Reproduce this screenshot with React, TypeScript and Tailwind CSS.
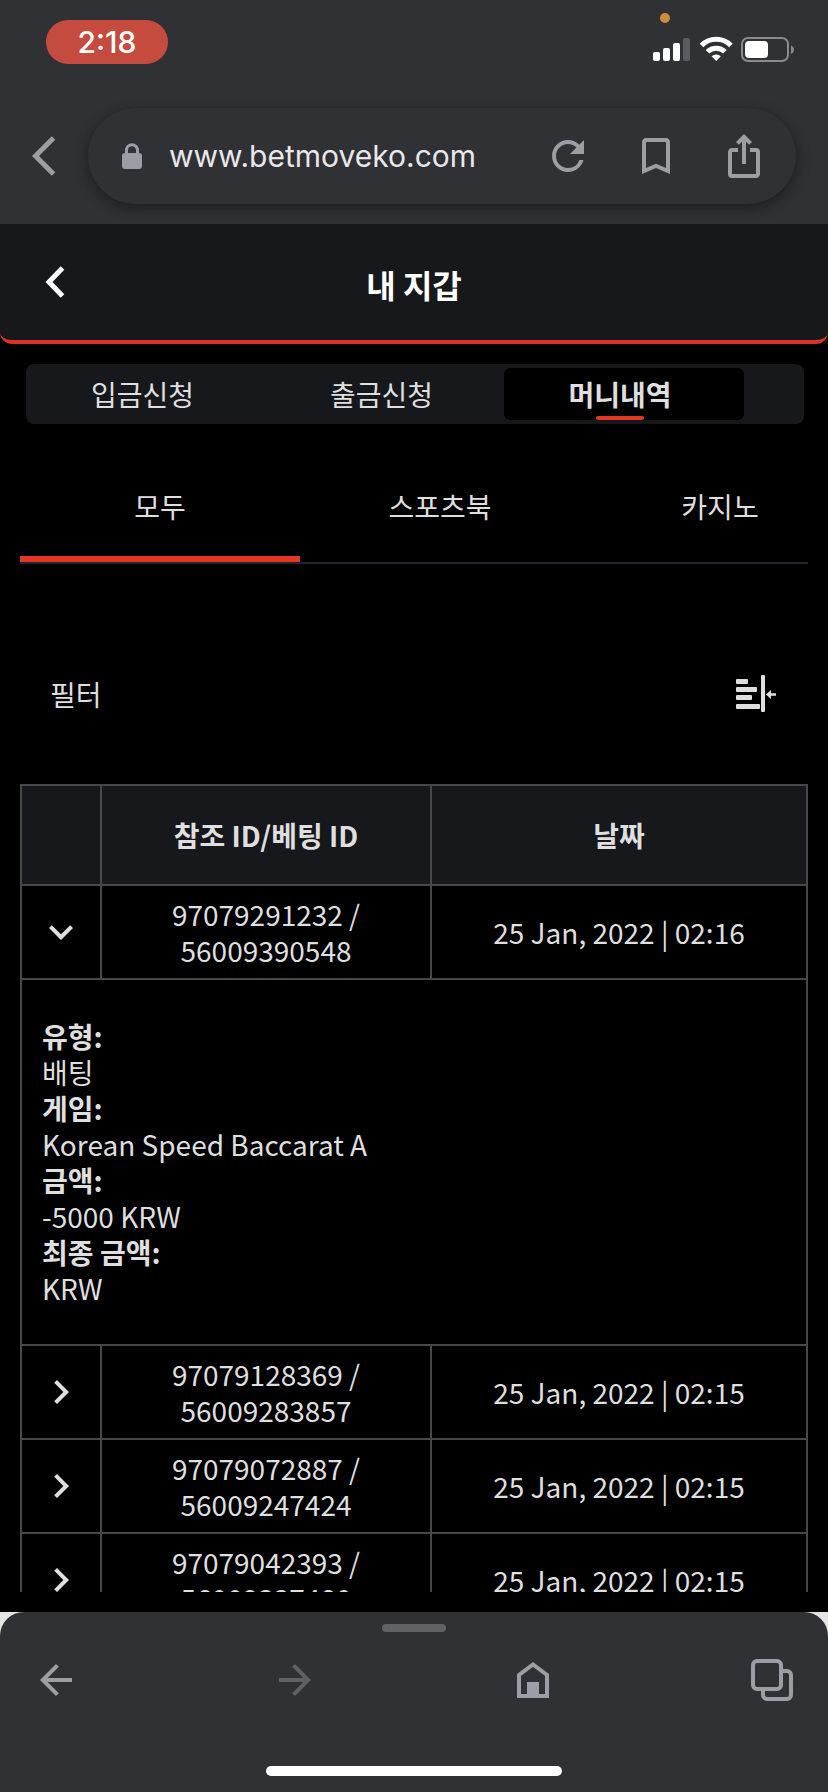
import { Fragment } from 'react';
import {
  MdArrowBack,
  MdArrowForward,
  MdBookmarkBorder,
  MdChevronRight,
  MdExpandMore,
  MdIosShare,
  MdRefresh,
} from 'react-icons/md';

const categories = ['모두', '스포츠북', '카지노'];

const details = [
  { label: '유형:', value: '배팅' },
  { label: '게임:', value: 'Korean Speed Baccarat A' },
  { label: '금액:', value: '-5000 KRW' },
  { label: '최종 금액:', value: 'KRW' },
];

const rows = [
  { ref: '97079291232', bet: '56009390548', date: '25 Jan, 2022 | 02:16', open: true },
  { ref: '97079128369', bet: '56009283857', date: '25 Jan, 2022 | 02:15', open: false },
  { ref: '97079072887', bet: '56009247424', date: '25 Jan, 2022 | 02:15', open: false },
  { ref: '97079042393', bet: '56009337480', date: '25 Jan, 2022 | 02:15', open: false },
];

function StatusIcons() {
  return (
    <svg width="142" height="50" viewBox="0 0 142 50" fill="none" aria-hidden="true">
      <circle cx="12" cy="5" r="5" fill="#c98f3a" />
      {/* Signal */}
      <g fill="#fff">
        <rect x="0" y="39" width="7" height="9" rx="2" />
        <rect x="10" y="35" width="7" height="13" rx="2" />
        <rect x="20" y="30" width="7" height="18" rx="2" />
        <rect x="30" y="25" width="7" height="23" rx="2" fill="#5c5c5e" />
      </g>
      {/* Wi-Fi */}
      <g stroke="#fff" strokeWidth="5">
        <path d="M48.500 32.500a20.500 20.500 0 0 1 29.400 0" />
        <path d="M54.500 38.800a12.200 12.200 0 0 1 17.400 0" />
      </g>
      <path d="M63.200 48l-4.600-4.700a6.500 6.500 0 0 1 9.200 0z" fill="#fff" />
      {/* Battery */}
      <rect x="89" y="25" width="46" height="23" rx="6" stroke="#8b8b8d" strokeWidth="2" />
      <rect x="92" y="28" width="23" height="17" rx="4" fill="#fff" />
      <path d="M138 32.500c4 1.500 4 7 0 8.500z" fill="#8b8b8d" />
    </svg>
  );
}

function BrowserBar() {
  return (
    <div className="shrink-0 bg-[#303134] pb-5">
      <div className="flex h-[108px] items-start justify-between pl-[46px] pr-[33px]">
        <span className="mt-5 flex h-11 w-[122px] items-center justify-center rounded-[22px] bg-[#c64b3f] font-['Inter'] text-[30px] font-medium text-white">
          2:18
        </span>
        <span className="mt-[13px]">
          <StatusIcons />
        </span>
      </div>

      <div className="flex items-center pr-8">
        <button
          aria-label="Back"
          className="flex h-24 w-[88px] shrink-0 items-center justify-center text-[#9b9ea5]"
        >
          <svg width="24" height="40" viewBox="0 0 24 40" fill="none" stroke="currentColor" strokeWidth="5">
            <path d="M21.500 2 3.500 20l18 18" />
          </svg>
        </button>
        <div className="flex h-24 min-w-0 flex-1 items-center rounded-full bg-[#303134] pl-[34px] pr-2 text-[#9b9ea5] shadow-[0_4px_14px_rgba(0,0,0,0.4)]">
          <svg width="20" height="26" viewBox="0 0 20 26" fill="none" className="shrink-0">
            <path d="M4.500 12V7.300a5.500 5.500 0 0 1 11 0V12" stroke="currentColor" strokeWidth="3" />
            <rect y="10" width="20" height="16" rx="3" fill="currentColor" />
          </svg>
          <input
            aria-label="Address"
            readOnly
            value="www.betmoveko.com"
            className="ml-[27px] min-w-0 flex-1 bg-transparent font-['Inter'] text-[30px] text-[#e8e8ea] outline-none"
          />
          <button aria-label="Reload" className="flex w-[88px] shrink-0 justify-center">
            <MdRefresh size={48} />
          </button>
          <button aria-label="Bookmark" className="flex w-[88px] shrink-0 justify-center">
            <MdBookmarkBorder size={48} />
          </button>
          <button aria-label="Share" className="flex w-[88px] shrink-0 justify-center">
            <MdIosShare size={48} />
          </button>
        </div>
      </div>
    </div>
  );
}

function WalletTabs() {
  return (
    <div className="mt-5 mr-6 ml-[26px] flex h-[60px] shrink-0 items-center rounded-lg bg-[#17181b] pr-[60px]">
      <button className="h-[52px] flex-1 pr-[6px]">입금신청</button>
      <button className="h-[52px] flex-1 pr-[6px]">출금신청</button>
      <button className="flex h-[52px] w-60 justify-center rounded-md bg-black pr-2 font-bold">
        <span className="relative flex h-full items-center">
          머니내역
          <span className="absolute bottom-0 left-1/2 h-1 w-12 -translate-x-1/2 rounded-full bg-[#e53625]" />
        </span>
      </button>
    </div>
  );
}

function FilterIcon() {
  return (
    <svg width="42" height="38" viewBox="0 0 42 38" fill="#dfdfdf" aria-hidden="true">
      <rect x="0" y="4" width="12" height="5" rx="1" />
      <rect x="0" y="12" width="21" height="5" rx="1" />
      <rect x="0" y="20" width="16" height="5" rx="1" />
      <rect x="0" y="29" width="24" height="5" rx="1" />
      <rect x="25" y="0" width="4" height="37" rx="1" />
      <path d="M30 19.500l5-4.500v3.300h5v2.400h-5V24z" />
    </svg>
  );
}

function HistoryTable() {
  return (
    <table className="w-full table-fixed border-collapse text-center">
      <colgroup>
        <col className="w-20" />
        <col className="w-[330px]" />
        <col />
      </colgroup>
      <thead>
        <tr className="h-[100px] bg-[#17181b]">
          <th aria-label="상세" className="border-2 border-[#47484a]" />
          <th className="border-2 border-[#47484a] font-bold">참조 ID/베팅 ID</th>
          <th className="border-2 border-[#47484a] font-bold">날짜</th>
        </tr>
      </thead>
      <tbody>
        {rows.map((row) => (
          <Fragment key={row.ref}>
            <tr className="h-[94px]">
              <td className="border-2 border-[#47484a]">
                <button aria-label="상세" className="block w-full">
                  {row.open ? (
                    <MdExpandMore size={48} className="mx-auto" />
                  ) : (
                    <MdChevronRight size={48} className="mx-auto" />
                  )}
                </button>
              </td>
              <td className="border-2 border-[#47484a]">
                {row.ref} /<br />
                {row.bet}
              </td>
              <td className="border-2 border-[#47484a]">{row.date}</td>
            </tr>
            {row.open && (
              <tr>
                <td colSpan={3} className="border-2 border-[#47484a] px-5 py-[38px] text-left">
                  <dl>
                    {details.map((item) => (
                      <Fragment key={item.label}>
                        <dt className="font-bold">{item.label}</dt>
                        <dd>{item.value}</dd>
                      </Fragment>
                    ))}
                  </dl>
                </td>
              </tr>
            )}
          </Fragment>
        ))}
      </tbody>
    </table>
  );
}

function BottomBar() {
  return (
    <div className="shrink-0 bg-[#e4e4e4]">
      <nav className="flex flex-col items-center rounded-t-3xl bg-[#303134] pt-3 pb-4 text-[#9b9ea5]">
        <div className="h-2 w-16 rounded-full bg-[#5f6368]" />
        <div className="mt-6 flex w-full items-center justify-between px-8">
          <button aria-label="Previous page">
            <MdArrowBack size={48} />
          </button>
          <button aria-label="Next page" className="text-[#5f6165]">
            <MdArrowForward size={48} />
          </button>
          <button aria-label="Home" className="flex w-12 justify-center">
            <svg width="32" height="36" viewBox="0 0 32 36" fill="none">
              <path d="M2 34V13L16 2.500 30 13v21z" stroke="currentColor" strokeWidth="4" />
              <path d="M10 20h12v14H10z" fill="currentColor" />
            </svg>
          </button>
          <button aria-label="Tabs" className="flex w-12 justify-center">
            <svg width="42" height="42" viewBox="0 0 42 42" fill="none" stroke="currentColor" strokeWidth="4">
              <rect x="2" y="2" width="28" height="28" rx="4" />
              <path d="M32 12h4a4 4 0 0 1 4 4v20a4 4 0 0 1-4 4H16a4 4 0 0 1-4-4v-4" />
            </svg>
          </button>
        </div>
        <div className="mt-[62px] h-[10px] w-[296px] rounded-full bg-white" />
      </nav>
    </div>
  );
}

function App() {
  return (
    <div className="flex h-screen flex-col overflow-hidden bg-black font-['Noto_Sans_CJK_KR',sans-serif] text-[28px] leading-9 text-[#dfdfdf]">
      <BrowserBar />

      {/* Page header */}
      <header className="grid h-[120px] shrink-0 grid-cols-[96px_1fr_96px] items-center rounded-b-xl border-b-4 border-[#dc3127] bg-[#17181b] text-white">
        <button aria-label="뒤로" className="ml-[45px]">
          <svg width="20" height="32" viewBox="0 0 20 32" fill="none" stroke="currentColor" strokeWidth="5">
            <path d="M17.500 2 4 16l13.500 14" />
          </svg>
        </button>
        <h1 className="pt-1 text-center text-[32px] font-bold">내 지갑</h1>
      </header>

      <WalletTabs />

      {/* Categories, scrolls sideways */}
      <div className="mx-5 mt-7 flex h-28 shrink-0 overflow-hidden border-b-2 border-[#23242d]">
        {categories.map((category, i) => (
          <button
            key={category}
            className={
              i === 0
                ? 'w-[280px] shrink-0 border-b-6 border-[#e53625] pt-1'
                : 'w-[280px] shrink-0 border-b-6 border-transparent pt-1'
            }
          >
            {category}
          </button>
        ))}
      </div>

      <div className="mt-[106px] mb-[66px] flex h-12 shrink-0 items-center justify-between px-[50px]">
        <span>필터</span>
        <button aria-label="필터">
          <FilterIcon />
        </button>
      </div>

      <main className="mx-5 mb-5 min-h-0 flex-1 overflow-hidden">
        <HistoryTable />
      </main>

      <BottomBar />
    </div>
  );
}

export default App;
